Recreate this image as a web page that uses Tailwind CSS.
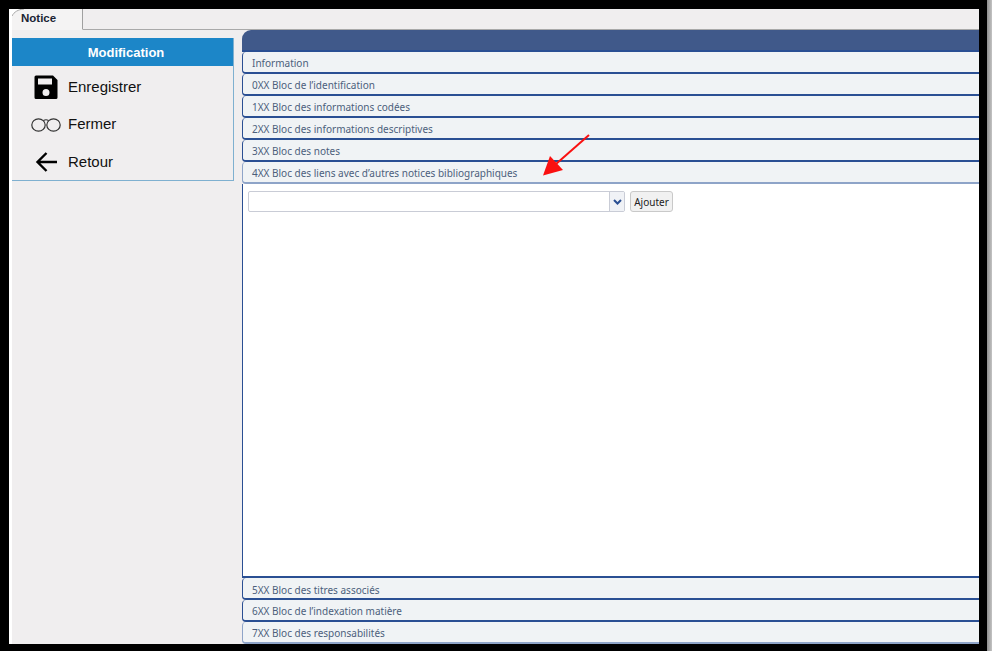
<!DOCTYPE html>
<html lang="fr">
<head>
  <meta charset="UTF-8" />
  <title>Notice</title>
  <script src="https://cdn.jsdelivr.net/npm/@tailwindcss/browser@4"></script>
</head>
<body class="bg-black h-[651px] w-[992px] overflow-hidden font-['Liberation_Sans',sans-serif]">
  <div class="flex h-[651px]">
    <div class="w-[987px] pt-[9px] pl-[9px] pr-[8px] pb-[7px] h-full">
      <div class="h-full bg-[#f0eeef] border-l-[3px] border-white flex flex-col">

        <!-- onglets -->
        <div class="h-[21px] border-b border-[#a9a9a9] flex shrink-0">
          <div class="relative w-[71px] h-[21px] bg-[#f4f3f3] border-r border-[#a0a0a0] border-b border-b-[#f4f3f3] pl-[9px] pt-[3px] text-[11.500px] leading-[13px] font-bold text-[#1b2433]">
            <svg class="absolute left-0 top-0 w-[12px] h-[8px]" viewBox="0 0 12 8" fill="none"><path d="M0 0h12C6 .5 2 3 0 7z" fill="#fff"/><path d="M0 7C2 3 6 .5 12 0" stroke="#a8a8a8"/></svg>
            Notice
          </div>
        </div>

        <div class="flex flex-1 min-h-0">
          <!-- menu gauche -->
          <div class="w-[222px] shrink-0 pt-[8px]">
            <div class="h-[143px] border-r border-b border-[#7fb0d0]">
              <div class="h-[28px] bg-[#1c86c8] border-r border-[#1c86c8] text-white text-[13px] font-bold text-center leading-[30px] pl-[8px]">Modification</div>
              <div class="flex items-center h-[38px] mt-[2px] pl-[21px] text-[15px] text-[#111]">
                <svg class="w-[26px] h-[26px] mr-[9px]" viewBox="0 0 26 26"><path fill="#000" fill-rule="evenodd" d="M3 1.500h17l4.500 4.500v17.500a1.500 1.500 0 0 1-1.500 1.500H3a1.500 1.500 0 0 1-1.500-1.500V3A1.500 1.500 0 0 1 3 1.500zM5 4.500v6h14v-6zM13 15a3.500 3.500 0 1 0 0 7 3.500 3.500 0 0 0 0-7z"/></svg>
                Enregistrer
              </div>
              <div class="flex items-center h-[37px] pl-[19px] text-[15px] text-[#111]">
                <svg class="w-[30px] h-[14px] mr-[7px]" viewBox="0 0 30 14" fill="none" stroke="#333" stroke-width="1.200"><ellipse cx="7.500" cy="7" rx="6.700" ry="6.200"/><ellipse cx="22.500" cy="7" rx="6.700" ry="6.200"/><path d="M12.500 2.500q2.500-1.500 5 0"/></svg>
                Fermer
              </div>
              <div class="flex items-center h-[38px] pl-[23px] text-[15px] text-[#111]">
                <svg class="w-[23px] h-[22px] mr-[10px]" viewBox="0 0 23 22" fill="none" stroke="#000" stroke-width="2.400"><path d="M22 11H3M11.500 2 2.500 11l9 9"/></svg>
                Retour
              </div>
            </div>
          </div>

          <!-- accordéon -->
          <div class="flex-1 min-w-0 ml-[8px] flex flex-col text-[10px] text-[#4c5f7c] font-['Noto_Sans',sans-serif]">
            <div class="h-[22px] shrink-0 bg-[#40598a] border-b-2 border-[#2a4f93] rounded-tl-[9px]"></div>
            <div class="h-[22px] shrink-0 pl-[9px] leading-[22px] bg-[#f0f3f5] border-l border-b-2 border-[#2a4f93] rounded-l-[4px]">Information</div>
            <div class="h-[22px] shrink-0 pl-[9px] leading-[22px] bg-[#f0f3f5] border-l border-b-2 border-[#2a4f93] rounded-l-[4px]">0XX Bloc de l’identification</div>
            <div class="h-[22px] shrink-0 pl-[9px] leading-[22px] bg-[#f0f3f5] border-l border-b-2 border-[#2a4f93] rounded-l-[4px]">1XX Bloc des informations codées</div>
            <div class="h-[22px] shrink-0 pl-[9px] leading-[22px] bg-[#f0f3f5] border-l border-b-2 border-[#2a4f93] rounded-l-[4px]">2XX Bloc des informations descriptives</div>
            <div class="h-[22px] shrink-0 pl-[9px] leading-[23px] bg-[#f0f3f5] border-l border-b-2 border-[#2a4f93] rounded-l-[4px]">3XX Bloc des notes</div>
            <div class="h-[22px] shrink-0 pl-[9px] leading-[22px] bg-[#f0f3f5] border-l border-b-2 border-[#8ea4c8] rounded-l-[4px]">4XX Bloc des liens avec d’autres notices bibliographiques</div>

            <div class="h-[394px] shrink-0 bg-white border-l border-b-2 border-[#2a4f93] pt-[7px] pl-[5px] flex items-start">
              <div class="w-[377px] h-[21px] border border-[#c9ccd6] rounded-[2px] bg-white flex justify-end">
                <div class="w-[15px] border-l border-[#c9ccd6] bg-[#f0f2f6] flex items-center justify-center">
                  <svg class="w-[9px] h-[6px]" viewBox="0 0 9 6" fill="none" stroke="#2a4f93" stroke-width="2"><path d="M1 1l3.500 3.500L8 1"/></svg>
                </div>
              </div>
              <div class="ml-[5px] w-[43px] h-[21px] border border-[#c9c9c9] rounded-[3px] bg-[#f1f1f1] text-center text-[10px] leading-[20px] text-[#222]">Ajouter</div>
            </div>

            <div class="h-[22px] shrink-0 pl-[9px] leading-[24px] bg-[#f0f3f5] border-l border-b-2 border-[#2a4f93] rounded-l-[4px]">5XX Bloc des titres associés</div>
            <div class="h-[22px] shrink-0 pl-[9px] leading-[23px] bg-[#f0f3f5] border-l border-b-2 border-[#2a4f93] rounded-l-[4px]">6XX Bloc de l’indexation matière</div>
            <div class="h-[22px] shrink-0 pl-[9px] leading-[23px] bg-[#f0f3f5] border-l border-b-2 border-[#8ea4c8] rounded-l-[4px]">7XX Bloc des responsabilités</div>
          </div>
        </div>
      </div>
    </div>
    <div class="w-[5px] h-full bg-gradient-to-r from-[#8f8f8f] to-[#c4c4c4]"></div>
  </div>

  <!-- flèche rouge annotée par-dessus la capture -->
  <svg class="absolute left-0 top-0 w-[992px] h-[651px] pointer-events-none" viewBox="0 0 992 651">
    <path d="M589 135 L556 164" stroke="#fa1010" stroke-width="2" fill="none"/>
    <path d="M543 175.500 L550 156 L563 170 Z" fill="#fa1010"/>
  </svg>
</body>
</html>
